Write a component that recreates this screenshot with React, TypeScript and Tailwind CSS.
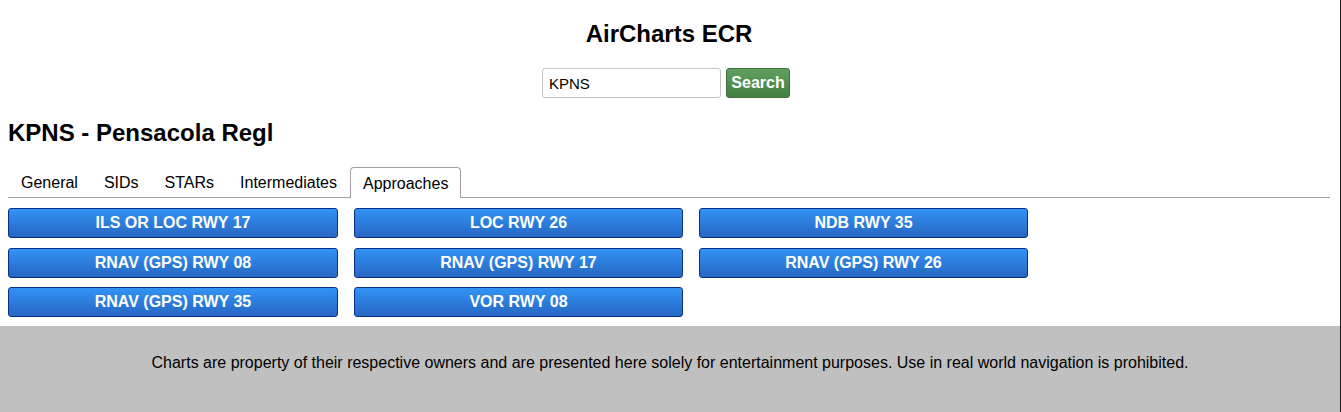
import React from "react";

const approaches = [
  "ILS OR LOC RWY 17",
  "LOC RWY 26",
  "NDB RWY 35",
  "RNAV (GPS) RWY 08",
  "RNAV (GPS) RWY 17",
  "RNAV (GPS) RWY 26",
  "RNAV (GPS) RWY 35",
  "VOR RWY 08",
];

const tabs = ["General", "SIDs", "STARs", "Intermediates"];

export default function App() {
  return (
    <div
      className="flex w-[1341px] h-[412px] overflow-hidden bg-white text-black"
      style={{ fontFamily: '"Liberation Sans", Arial, Helvetica, sans-serif' }}
    >
      <div className="flex flex-1 flex-col">
        <div className="flex h-[68px] items-center justify-center pr-[2px]">
          <h1 className="text-[24px] font-bold leading-none">AirCharts ECR</h1>
        </div>
        <div className="flex h-[30px] justify-center gap-[5px] pr-[8px]">
          <input
            defaultValue="KPNS"
            className="h-[30px] w-[179px] rounded-[3px] border border-[#c4c4c4] bg-white px-[6px] text-[15px] outline-none"
          />
          <button className="h-[30px] w-[64px] rounded-[3px] border border-[#3f6e3f] bg-gradient-to-b from-[#62a062] to-[#427f42] text-[16px] font-bold text-white">
            Search
          </button>
        </div>
        <div className="flex h-[69px] items-center px-[8px]">
          <h2 className="text-[24px] font-bold leading-none">KPNS - Pensacola Regl</h2>
        </div>
        <div className="ml-[8px] mr-[10px] flex h-[31px] border-b border-[#a0a0a0]">
          {tabs.map((t) => (
            <div key={t} className="flex items-center px-[13px] pt-[2px] text-[16px]">
              {t}
            </div>
          ))}
          <div className="-mb-px flex items-center rounded-t-[4px] border border-b-0 border-[#a0a0a0] bg-white px-[12px] pt-[2px] text-[16px]">
            Approaches
          </div>
        </div>
        <div className="grid grid-cols-[330px_329px_329px] gap-x-[16px] gap-y-[9.5px] px-[8px] pt-[10px]">
          {approaches.map((a) => (
            <button
              key={a}
              className="flex h-[30px] items-center justify-center rounded-[3px] border border-[#0b2f86] bg-gradient-to-b from-[#3293f5] to-[#2767c2] text-[16px] font-bold text-white"
            >
              {a}
            </button>
          ))}
        </div>
        <div className="mt-auto flex h-[86px] items-center justify-center bg-[#c0c0c0] pb-[12px] text-[16px]">
          Charts are property of their respective owners and are presented here solely for entertainment purposes. Use in real world navigation is prohibited.
        </div>
      </div>
      <div className="w-px bg-[#1a1a1a]" />
    </div>
  );
}
